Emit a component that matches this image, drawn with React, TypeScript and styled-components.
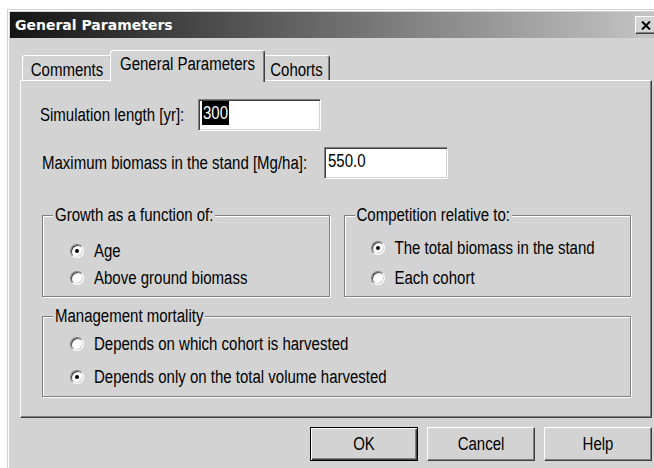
import React from "react";
import styled, { createGlobalStyle } from "styled-components";

const FACE = "#d3d3d3";
const SHADOW = "#808080";
const DARK = "#404040";
const UI_FONT = `"Liberation Sans", Arial, sans-serif`;

type Choice = { label: string; checked?: boolean };

const growthChoices: Choice[] = [
  { label: "Age", checked: true },
  { label: "Above ground biomass" },
];

const competitionChoices: Choice[] = [
  { label: "The total biomass in the stand", checked: true },
  { label: "Each cohort" },
];

const mortalityChoices: Choice[] = [
  { label: "Depends on which cohort is harvested" },
  { label: "Depends only on the total volume harvested", checked: true },
];

function RadioGroup({
  title,
  choices,
  pad,
  gap,
}: {
  title: string;
  choices: Choice[];
  pad: string;
  gap: number;
}) {
  return (
    <GroupBox>
      <GroupTitle>
        <Caption>{title}</Caption>
      </GroupTitle>
      <RadioList $pad={pad} $gap={gap}>
        {choices.map(choice => (
          <Option key={choice.label}>
            <RadioMark $checked={choice.checked} />
            <Caption>{choice.label}</Caption>
          </Option>
        ))}
      </RadioList>
    </GroupBox>
  );
}

export default function App() {
  return (
    <>
      <GlobalStyle />
      <Window>
        <TitleBar>
          <Title>General Parameters</Title>
          <CloseButton>
            <svg width="10" height="9" viewBox="0 0 10 9">
              <path d="M1 0.5 L9 8.5 M9 0.5 L1 8.5" stroke="#000" strokeWidth="2" />
            </svg>
          </CloseButton>
        </TitleBar>
        <Client>
          <TabRow>
            <Tab $width={90}>
              <Caption>Comments</Caption>
            </Tab>
            <Tab $width={155} $active>
              <Caption>General Parameters</Caption>
            </Tab>
            <Tab $width={67}>
              <Caption>Cohorts</Caption>
            </Tab>
          </TabRow>
          <TabPanel>
            <FieldRow $indent={0}>
              <FieldLabel $width={158}>
                <Caption>Simulation length [yr]:</Caption>
              </FieldLabel>
              <TextBox $width={123}>
                <Selected>300</Selected>
              </TextBox>
            </FieldRow>
            <FieldRow $indent={2} $top={16}>
              <FieldLabel $width={282}>
                <Caption>Maximum biomass in the stand [Mg/ha]:</Caption>
              </FieldLabel>
              <TextBox $width={124}>
                <Caption>550.0</Caption>
              </TextBox>
            </FieldRow>
            <GroupRow>
              <RadioGroup title="Growth as a function of:" choices={growthChoices} pad="16px 0 8px 27px" gap={7} />
              <RadioGroup title="Competition relative to:" choices={competitionChoices} pad="13px 0 8px 26px" gap={10} />
            </GroupRow>
            <MortalityArea>
              <RadioGroup title="Management mortality" choices={mortalityChoices} pad="8px 0 9px 27px" gap={13} />
            </MortalityArea>
          </TabPanel>
          <ButtonRow>
            <PushButton $default>
              <Caption>OK</Caption>
            </PushButton>
            <PushButton>
              <Caption>Cancel</Caption>
            </PushButton>
            <PushButton>
              <Caption>Help</Caption>
            </PushButton>
          </ButtonRow>
        </Client>
      </Window>
    </>
  );
}

const GlobalStyle = createGlobalStyle`
  html, body {
    margin: 0;
    padding: 0;
    background: #fff;
    overflow: hidden;
  }
`;

const Window = styled.div`
  box-sizing: border-box;
  margin: 9px 0 0 7px;
  width: 656px;
  height: 480px;
  padding: 2px;
  background: ${FACE};
  border: 1px solid;
  border-color: ${FACE} ${DARK} ${DARK} ${FACE};
  box-shadow: inset 1px 1px #fff, inset -1px -1px ${SHADOW};
  font-family: ${UI_FONT};
  font-size: 15px;
  line-height: 20px;
  color: #000;
`;

// the dialog font is drawn tall and narrow
const Caption = styled.span`
  display: inline-block;
  transform: scaleY(1.2);
  white-space: nowrap;
`;

const TitleBar = styled.div`
  height: 26px;
  display: flex;
  align-items: center;
  justify-content: space-between;
  padding: 0 3px 0 5px;
  background: linear-gradient(to right, #141414, #c6c6c6);
`;

const Title = styled.span`
  font-family: "DejaVu Sans", Verdana, sans-serif;
  font-weight: bold;
  font-size: 14px;
  color: #fff;
  white-space: nowrap;
`;

const CloseButton = styled.div`
  box-sizing: border-box;
  width: 22px;
  height: 18px;
  display: flex;
  align-items: center;
  justify-content: center;
  background: ${FACE};
  border: 1px solid;
  border-color: #fff ${DARK} ${DARK} #fff;
  box-shadow: inset -1px -1px ${SHADOW};
`;

const Client = styled.div`
  padding: 12px 8px 0 10px;
`;

const TabRow = styled.div`
  display: flex;
  align-items: flex-end;
  height: 30px;
  padding-left: 2px;
`;

const Tab = styled.div<{ $width: number; $active?: boolean }>`
  box-sizing: border-box;
  flex: none;
  width: ${p => p.$width}px;
  height: ${p => (p.$active ? 32 : 25)}px;
  margin: ${p => (p.$active ? "0 -2px -2px" : "0")};
  position: relative;
  z-index: ${p => (p.$active ? 1 : 0)};
  display: flex;
  justify-content: center;
  align-items: flex-start;
  padding-top: ${p => (p.$active ? 3 : 4)}px;
  background: ${FACE};
  border-top: 1px solid #fff;
  border-left: 1px solid #fff;
  border-right: 1px solid ${DARK};
  border-radius: 3px 3px 0 0;
  box-shadow: inset -1px 0 ${SHADOW};
`;

const TabPanel = styled.div`
  box-sizing: border-box;
  height: 338px;
  padding: 18px 20px 0 19px;
  border: 1px solid;
  border-color: #fff ${DARK} ${DARK} #fff;
  box-shadow: inset -1px -1px ${SHADOW};
`;

const FieldRow = styled.div<{ $indent: number; $top?: number }>`
  display: flex;
  align-items: center;
  margin-top: ${p => p.$top ?? 0}px;
  padding-left: ${p => p.$indent}px;
`;

const FieldLabel = styled.span<{ $width: number }>`
  flex: none;
  width: ${p => p.$width}px;
`;

const TextBox = styled.div<{ $width: number }>`
  box-sizing: border-box;
  flex: none;
  width: ${p => p.$width}px;
  height: 32px;
  padding: 3px 0 0 3px;
  background: #fff;
  border: 1px solid;
  border-color: ${SHADOW} #fff #fff ${SHADOW};
  box-shadow: inset 1px 1px ${DARK}, inset -1px -1px ${FACE};
`;

const Selected = styled(Caption)`
  background: #000;
  color: #fff;
  padding: 0 1px;
`;

const GroupRow = styled.div`
  display: grid;
  grid-template-columns: 1fr 1fr;
  gap: 14px;
  margin-top: 26px;
  padding-left: 2px;
`;

const MortalityArea = styled.div`
  display: flex;
  flex-direction: column;
  margin-top: 9px;
  padding-left: 2px;
`;

const GroupBox = styled.fieldset`
  margin: 0;
  padding: 0;
  min-width: 0;
  border: 1px solid ${SHADOW};
  box-shadow: inset 1px 1px #fff, 1px 1px #fff;
`;

const GroupTitle = styled.legend`
  margin-left: 10px;
  padding: 0 2px;
  background: ${FACE};
  line-height: 20px;
`;

const RadioList = styled.div<{ $pad: string; $gap: number }>`
  display: flex;
  flex-direction: column;
  gap: ${p => p.$gap}px;
  padding: ${p => p.$pad};
`;

const Option = styled.label`
  display: flex;
  align-items: center;
  gap: 10px;
  height: 20px;
`;

const RadioMark = styled.span<{ $checked?: boolean }>`
  box-sizing: border-box;
  flex: none;
  width: 14px;
  height: 14px;
  border-radius: 50%;
  display: flex;
  align-items: center;
  justify-content: center;
  background: #fff;
  border: 1px solid;
  border-color: ${SHADOW} #fff #fff ${SHADOW};
  box-shadow: inset 1px 1px ${DARK}, inset -1px -1px ${FACE};

  &::after {
    content: "";
    display: ${p => (p.$checked ? "block" : "none")};
    width: 4px;
    height: 4px;
    border-radius: 50%;
    background: #000;
  }
`;

const ButtonRow = styled.div`
  display: flex;
  justify-content: flex-end;
  gap: 9px;
  margin-top: 9px;
`;

const PushButton = styled.div<{ $default?: boolean }>`
  box-sizing: border-box;
  width: 108px;
  height: 34px;
  display: flex;
  align-items: center;
  justify-content: center;
  background: ${FACE};
  border: 1px solid;
  border-color: ${p => (p.$default ? "#000" : `#fff ${DARK} ${DARK} #fff`)};
  box-shadow: ${p =>
    p.$default
      ? `inset 1px 1px #fff, inset -1px -1px ${DARK}, inset -2px -2px ${SHADOW}`
      : `inset -1px -1px ${SHADOW}`};
`;
